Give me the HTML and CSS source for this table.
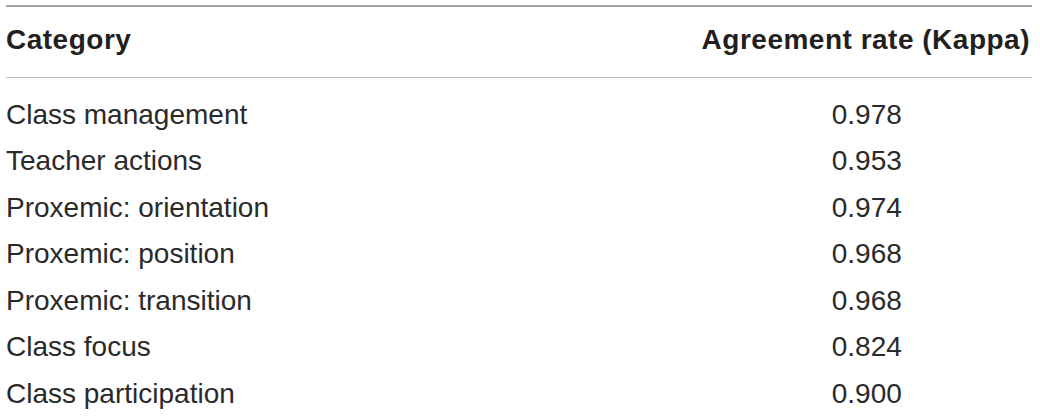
FILE: index.html
```html
<!DOCTYPE html>
<html lang="en">
<head>
    <meta charset="UTF-8">
    <meta name="viewport" content="width=device-width, initial-scale=1.0">
    <title>Agreement rates</title>
    <link rel="stylesheet" href="styles.css">
</head>
<body>
    <table class="kappa-table">
        <thead>
            <tr>
                <th class="col-cat">Category</th>
                <th class="col-val">Agreement rate (Kappa)</th>
            </tr>
        </thead>
        <tbody>
            <tr><td>Class management</td><td class="val">0.978</td></tr>
            <tr><td>Teacher actions</td><td class="val">0.953</td></tr>
            <tr><td>Proxemic: orientation</td><td class="val">0.974</td></tr>
            <tr><td>Proxemic: position</td><td class="val">0.968</td></tr>
            <tr><td>Proxemic: transition</td><td class="val">0.968</td></tr>
            <tr><td>Class focus</td><td class="val">0.824</td></tr>
            <tr><td>Class participation</td><td class="val">0.900</td></tr>
        </tbody>
    </table>
</body>
</html>
```

FILE: styles.css
```css
body {
    margin: 0;
    background: #fff;
    font-family: "Liberation Sans", Arial, sans-serif;
    color: #231f20;
}
.kappa-table {
    margin: 5px 8px 0 6px;
    width: calc(100% - 14px);
    border-collapse: collapse;
    border-top: 2px solid #a3a3a3;
}
.kappa-table th {
    font-size: 28px;
    font-weight: bold;
    letter-spacing: 0.5px;
    line-height: 40px;
    padding: 13px 0 17px 0;
    border-bottom: 1px solid #bcbcbc;
    white-space: nowrap;
}
.col-cat {
    text-align: left;
}
.col-val {
    width: 1%;
    text-align: right;
    padding-right: 2px !important;
}
.kappa-table td {
    font-size: 28px;
    line-height: 46.5px;
    padding: 0;
    white-space: nowrap;
    color: #2a2a2a;
}
.kappa-table tbody tr:first-child td {
    padding-top: 13.5px;
}
.val {
    text-align: center;
}
```
